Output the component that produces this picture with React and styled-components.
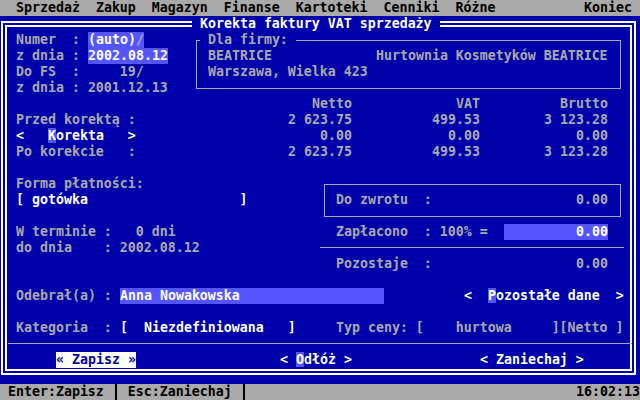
import styled, { createGlobalStyle } from 'styled-components'

const GlobalStyle = createGlobalStyle`
  html, body {
    margin: 0;
    padding: 0;
    background: #0000aa;
  }
`

const Screen = styled.div`
  width: 640px;
  height: 400px;
  display: flex;
  flex-direction: column;
  overflow: hidden;
  background: #0000aa;
  color: #aaaaaa;
  font-family: 'DejaVu Sans Mono', 'Liberation Mono', monospace;
  font-size: 13.288px;
  font-weight: bold;
  line-height: 16px;
  white-space: pre;
`

const Bar = styled.div`
  height: 16px;
  flex: none;
  display: flex;
  gap: ${p => p.$gap}px;
  padding: 0 ${p => p.$right}px 0 ${p => p.$left}px;
  background: #aaaaaa;
  color: #000000;
`

const Push = styled.span`
  margin-left: auto;
`

const Sep = styled.span`
  width: 2px;
  margin: 0 3px;
  background: #000000;
`

// the dialog is a text-mode sheet: 80 columns x 23 rows of 8x16 cells
const Desk = styled.div`
  flex: 1;
  display: grid;
  grid-template-columns: repeat(80, 8px);
  grid-template-rows: repeat(23, 16px);
`

const Frame = styled.div`
  grid-row: 1 / span 23;
  grid-column: 1 / span 80;
  margin: 5px 4px 9px 1px;
  border: 6px double #ffffff;
`

const Box = styled.div`
  grid-row: ${p => p.$r} / span ${p => p.$h};
  grid-column: ${p => p.$c + 1} / span ${p => p.$w};
  margin: 8px 3px 7px 4px;
  border: 1px solid #aaaaaa;
`

const Rule = styled.div`
  grid-row: ${p => p.$r};
  grid-column: ${p => p.$c + 1} / span ${p => p.$w};
  align-self: start;
  margin-top: 7px;
  height: 1px;
  background: #aaaaaa;
`

const Cell = styled.span`
  grid-row: ${p => p.$r};
  grid-column: ${p => p.$c + 1} / span ${p => p.$w || 1};
  justify-self: ${p => (p.$w ? 'stretch' : 'start')};
  text-align: ${p => (p.$right ? 'right' : 'left')};
  color: #aaaaaa;
`

const Bright = styled(Cell)`
  color: #ffffff;
`

const Title = styled(Cell)`
  background: #0000aa;
  color: #ffffff;
`

const Legend = styled(Cell)`
  background: #0000aa;
`

const Input = styled(Cell)`
  background: #5555ff;
  color: #ffffff;
`

const Button = styled(Cell)`
  background: #ffffff;
  color: #0000aa;
`

const Hot = styled.span`
  background: #5555ff;
  color: #ffffff;
`

const Slash = styled.span`
  color: #aaaaaa;
`

const Amount = ({ r, end, children }) => (
  <Cell $r={r} $c={end - children.length + 1}>
    {children}
  </Cell>
)

const menu = ['Sprzedaż', 'Zakup', 'Magazyn', 'Finanse', 'Kartoteki', 'Cenniki', 'Różne']

const rows = [
  { r: 7, label: 'Przed korektą :', v: ['2 623.75', '499.53', '3 123.28'] },
  { r: 8, v: ['0.00', '0.00', '0.00'] },
  { r: 9, label: 'Po korekcie   :', v: ['2 623.75', '499.53', '3 123.28'] },
]

const ends = [43, 59, 75]

export default function App() {
  return (
    <Screen>
      <GlobalStyle />
      <Bar $gap={16} $left={16} $right={8}>
        {menu.map(m => (
          <span key={m}>{m}</span>
        ))}
        <Push>Koniec</Push>
      </Bar>

      <Desk>
        <Frame />
        <Box $r={2} $h={4} $c={24} $w={54} />
        <Box $r={11} $h={3} $c={40} $w={38} />
        <Rule $r={15} $c={40} $w={38} />
        <Rule $r={21} $c={1} $w={78} />

        <Title $r={1} $c={24}> Korekta faktury VAT sprzedaży </Title>

        <Cell $r={2} $c={2}>Numer  :</Cell>
        <Input $r={2} $c={11} $w={7}>
          (auto)<Slash>/</Slash>
        </Input>
        <Cell $r={3} $c={2}>z dnia :</Cell>
        <Input $r={3} $c={11} $w={10}>2002.08.12</Input>
        <Cell $r={4} $c={2}>Do FS  :     19/</Cell>
        <Cell $r={5} $c={2}>z dnia : 2001.12.13</Cell>

        <Legend $r={2} $c={25}> Dla firmy: </Legend>
        <Cell $r={3} $c={26}>BEATRICE</Cell>
        <Cell $r={3} $c={47}>Hurtownia Kosmetyków BEATRICE</Cell>
        <Cell $r={4} $c={26}>Warszawa, Wielka 423</Cell>

        <Amount r={6} end={43}>Netto</Amount>
        <Amount r={6} end={59}>VAT</Amount>
        <Amount r={6} end={75}>Brutto</Amount>

        {rows.map(row =>
          row.v.map((v, i) => (
            <Amount key={`${row.r}-${i}`} r={row.r} end={ends[i]}>
              {v}
            </Amount>
          ))
        )}
        <Cell $r={7} $c={2}>Przed korektą :</Cell>
        <Bright $r={8} $c={2}>
          {'<   '}
          <Hot>K</Hot>
          {'orekta   >'}
        </Bright>
        <Cell $r={9} $c={2}>Po korekcie   :</Cell>

        <Cell $r={11} $c={2}>Forma płatności:</Cell>
        <Bright $r={12} $c={2}>{'[ gotówka                   ]'}</Bright>
        <Cell $r={12} $c={42}>Do zwrotu  :</Cell>
        <Amount r={12} end={75}>0.00</Amount>

        <Cell $r={14} $c={2}>W terminie :   0 dni</Cell>
        <Cell $r={15} $c={2}>do dnia    : 2002.08.12</Cell>
        <Cell $r={14} $c={42}>Zapłacono  : 100% =</Cell>
        <Input $r={14} $c={63} $w={13} $right>
          0.00
        </Input>
        <Cell $r={16} $c={42}>Pozostaje  :</Cell>
        <Amount r={16} end={75}>0.00</Amount>

        <Cell $r={18} $c={2}>Odebrał(a) :</Cell>
        <Input $r={18} $c={15} $w={33}>
          Anna Nowakowska
        </Input>
        <Bright $r={18} $c={58}>
          {'<  '}
          <Hot>P</Hot>
          {'ozostałe dane  >'}
        </Bright>

        <Cell $r={20} $c={2}>Kategoria  :</Cell>
        <Bright $r={20} $c={15}>{'[  Niezdefiniowana   ]'}</Bright>
        <Cell $r={20} $c={42}>{'Typ ceny: [    hurtowa     ][Netto ]'}</Cell>

        <Button $r={22} $c={7}>« Zapisz »</Button>
        <Bright $r={22} $c={35}>
          {'< '}
          <Hot>O</Hot>
          {'dłóż >'}
        </Bright>
        <Bright $r={22} $c={60}>{'< Zaniechaj >'}</Bright>
      </Desk>

      <Bar $gap={8} $left={8} $right={0}>
        <span>Enter:Zapisz</span>
        <Sep />
        <span>Esc:Zaniechaj</span>
        <Sep />
        <Push>16:02:13</Push>
      </Bar>
    </Screen>
  )
}
